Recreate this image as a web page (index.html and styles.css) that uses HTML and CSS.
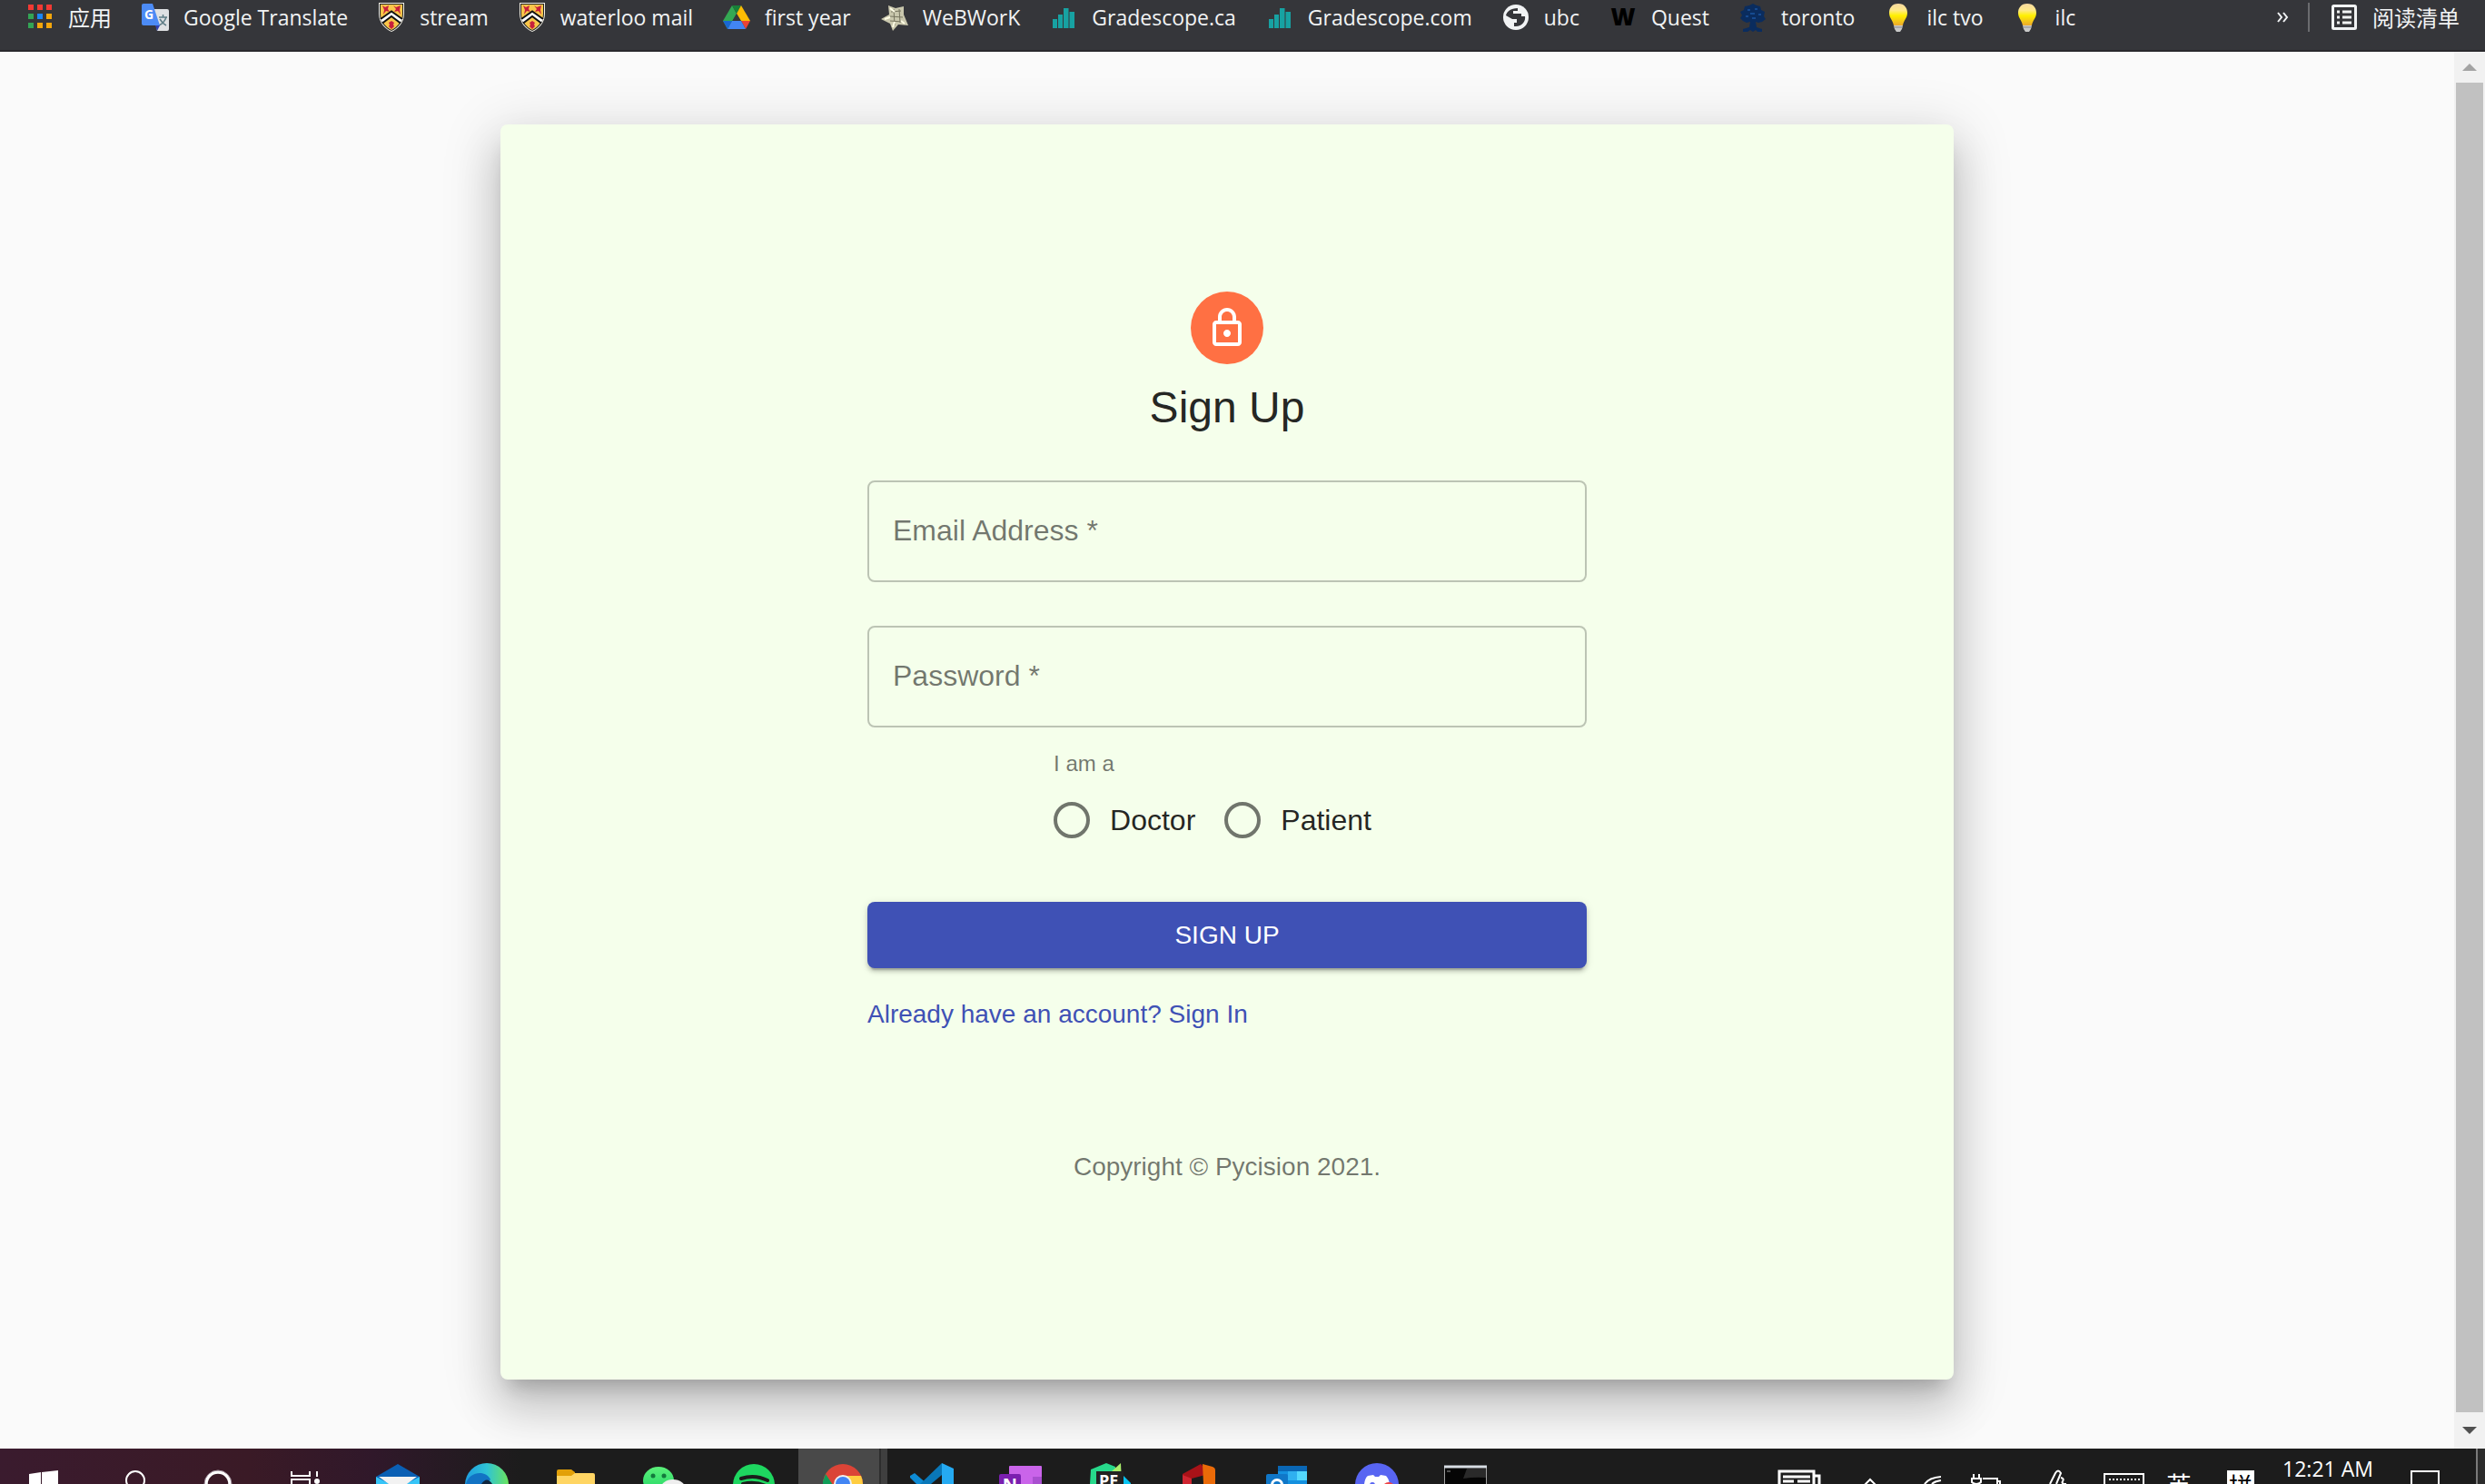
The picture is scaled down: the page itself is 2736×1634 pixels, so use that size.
FILE: index.html
```html
<!DOCTYPE html>
<html lang="en">
<head>
    <meta charset="UTF-8">
    <meta name="viewport" content="width=device-width, initial-scale=1.0">
    <title>Sign Up</title>
    <link rel="stylesheet" href="styles.css">
</head>
<body>
    <!-- shared bookmark icons -->
    <svg class="defs" width="0" height="0" aria-hidden="true">
        <symbol id="shield" viewBox="0 0 32 32">
            <path d="M2 0H30V12C30 22 23 29 16 32C9 29 2 22 2 12Z" fill="#f4f1e6"/>
            <path d="M3 1H29V12C29 21 23 28 16 31C9 28 3 21 3 12Z" fill="#222"/>
            <path d="M4 2H28V12C28 21 22 27 16 30C10 27 4 21 4 12Z" fill="#f9c64a"/>
            <path d="M6 3l3 2 4-2-1 4 2 3-4-1-3 4 1-5zM18 3l3 2 5-2-1 5 1 5-3-4-4 1 2-3zM13 22l3-2 3 2-1 2 1 2-3 3-3-3 1-2z" fill="#c8203c"/>
            <path d="M5 20L16 12L27 20" fill="none" stroke="#fff" stroke-width="5"/>
            <path d="M4 18L16 9.500L28 18M6 22.500L16 15L26 22.500" fill="none" stroke="#111" stroke-width="2"/>
        </symbol>
        <symbol id="bars" viewBox="0 0 32 32">
            <path d="M4 18h5v10H4zM10 13h5v15h-5zM16 6h5.500v22H16zM22.500 10h5.500v18h-5.500z" fill="#17a2a2"/>
        </symbol>
        <symbol id="bulb" viewBox="0 0 32 32">
            <path d="M16 1C9 1 6 6 6 11C6 17 10 19 11 25H21C22 19 26 17 26 11C26 6 23 1 16 1Z" fill="url(#glow)"/>
            <path d="M11 25h10l-1 4-2 3h-4l-2-3z" fill="#c9c9c9"/>
            <path d="M11 27h10" stroke="#8a8a8a"/>
        </symbol>
        <linearGradient id="glow" x2="0" y2="1">
            <stop offset="0" stop-color="#f7d9a0"/>
            <stop offset=".3" stop-color="#ffe98a"/>
            <stop offset=".55" stop-color="#fff000"/>
            <stop offset="1" stop-color="#eda92c"/>
        </linearGradient>
    </svg>

    <nav class="bookmarks">
        <a href="#" class="bookmark cjk" lang="zh">
            <svg viewBox="0 0 32 32">
                <path d="M3 2h6v6H3zM13 2h6v6h-6zM23 2h6v6h-6z" fill="#f33a34"/>
                <path d="M3 12h6v6H3zM3 22h6v6H3z" fill="#33a455"/>
                <path d="M13 12h6v6h-6z" fill="#1a86f7"/>
                <path d="M23 12h6v6h-6zM13 22h6v6h-6zM23 22h6v6h-6z" fill="#f4a60b"/>
            </svg>
            应用
        </a>
        <a href="#" class="bookmark">
            <svg viewBox="0 0 32 32">
                <path d="M13 7H29Q31 7 31 9V29Q31 31 29 31H18Z" fill="#dfe1e3"/>
                <path d="M20 16h9M24.500 13v3M28 16Q26 22 20 25M21 18Q24 23 28 25" fill="none" stroke="#5f7d86" stroke-width="1.500"/>
                <path d="M16 25H21L18 31Z" fill="#3040b0"/>
                <path d="M3 1H13L21 25H3Q1 25 1 23V3Q1 1 3 1Z" fill="#4c8bf5"/>
                <text x="4" y="18" class="glyph" font-size="14" fill="#fff">G</text>
            </svg>
            Google Translate
        </a>
        <a href="#" class="bookmark"><svg><use href="#shield"/></svg>stream</a>
        <a href="#" class="bookmark"><svg><use href="#shield"/></svg>waterloo mail</a>
        <a href="#" class="bookmark">
            <svg viewBox="0 0 32 32">
                <path d="M11 3L1 20L6 29L16 12Z" fill="#34a853"/>
                <path d="M11 3H21L16 12Z" fill="#188038"/>
                <path d="M21 3L31 20H21L16 12Z" fill="#fbbc04"/>
                <path d="M31 20L26 29L21 20Z" fill="#ea4335"/>
                <path d="M11 20H21L26 29H6Z" fill="#4285f4"/>
                <path d="M1 20H11L6 29Z" fill="#1967d2"/>
                <path d="M16 12L20.500 20H11.500Z" fill="#35363a"/>
            </svg>
            first year
        </a>
        <a href="#" class="bookmark">
            <svg viewBox="0 0 32 32">
                <path d="M9 3L17 6L26 4L26 13L31 25L20 24L14 31L11 23L1 18L10 13Z" fill="#c9c7ad"/>
                <path d="M12 10l11-1M11 15l14 1M11 20l14 1M15 7l1 18M21 7l1 15" stroke="#77755f" fill="none"/>
                <path d="M11 6l5 4M5 18l6-2M14 27l2-6M23 20l4 3" stroke="#fffde6" stroke-width="2" fill="none"/>
            </svg>
            WeBWorK
        </a>
        <a href="#" class="bookmark"><svg><use href="#bars"/></svg>Gradescope.ca</a>
        <a href="#" class="bookmark"><svg><use href="#bars"/></svg>Gradescope.com</a>
        <a href="#" class="bookmark">
            <svg viewBox="0 0 32 32">
                <circle cx="16" cy="16" r="14" fill="#f1f3f4"/>
                <path d="M18 6C10 6 6 10 5 14L12 18H17V22H14V26C23 27 27 20 26 15H22V12H13V9H18Z" fill="#35363a"/>
            </svg>
            ubc
        </a>
        <a href="#" class="bookmark">
            <svg viewBox="0 0 32 32"><text x="16" y="25" text-anchor="middle" class="glyph heavy" font-size="26">W</text></svg>
            Quest
        </a>
        <a href="#" class="bookmark">
            <svg viewBox="0 0 32 32">
                <path d="M16 1l4 2 4 1 1 4 4 2-1 5 2 3-4 3-4 1-3-1 1 6 6 2v3h-5l-2-2-3 2-3-2-3 2H5v-3l7-2 1-6-4 1-4-2-3-3 2-3-2-4 4-2 1-4 5-1z" fill="#0a2c5e"/>
                <path d="M10 8h3M18 7h3M13 12h5M22 13h3M8 15h3M15 17h4" stroke="#164a90" stroke-width="2"/>
            </svg>
            toronto
        </a>
        <a href="#" class="bookmark"><svg><use href="#bulb"/></svg>ilc tvo</a>
        <a href="#" class="bookmark"><svg><use href="#bulb"/></svg>ilc</a>
        <button class="more" aria-label="More bookmarks">
            <svg viewBox="0 0 16 16"><path d="M3 3l4 5-4 5M9 3l4 5-4 5" fill="none" stroke="#f1f3f4" stroke-width="2"/></svg>
        </button>
        <a href="#" class="bookmark cjk reading-list" lang="zh">
            <svg viewBox="0 0 32 32">
                <rect x="3.500" y="3.500" width="25" height="25" rx="1" fill="none" stroke="#f1f3f4" stroke-width="3"/>
                <path d="M8 10h3M8 16h3M8 22h3M14 10h10M14 16h10M14 22h10" stroke="#f1f3f4" stroke-width="3"/>
            </svg>
            阅读清单
        </a>
    </nav>

    <div class="viewport">
        <main class="page">
            <div class="card">
                <div class="container">
                    <div class="avatar">
                        <svg viewBox="0 0 24 24"><path fill="#fff" d="M12 17c1.100 0 2-.9 2-2s-.9-2-2-2-2 .9-2 2 .9 2 2 2zm6-9h-1V6c0-2.760-2.240-5-5-5S7 3.240 7 6v2H6c-1.100 0-2 .9-2 2v10c0 1.100.9 2 2 2h12c1.100 0 2-.9 2-2V10c0-1.100-.9-2-2-2zM9 6c0-1.660 1.340-3 3-3s3 1.340 3 3v2H9V6zm9 14H6V10h12v10z"/></svg>
                    </div>
                    <h1>Sign Up</h1>
                    <form class="form">
                        <div class="field">
                            <input type="email" id="email" required>
                            <label for="email">Email Address *</label>
                        </div>
                        <div class="field">
                            <input type="password" id="password" required>
                            <label for="password">Password *</label>
                        </div>
                        <fieldset class="role">
                            <legend>I am a</legend>
                            <div class="options">
                                <label class="option"><input type="radio" name="role" value="doctor">Doctor</label>
                                <label class="option"><input type="radio" name="role" value="patient">Patient</label>
                            </div>
                        </fieldset>
                        <button type="submit" class="submit-btn">SIGN UP</button>
                        <a href="#" class="signin-link">Already have an account? Sign In</a>
                    </form>
                    <p class="copyright">Copyright © Pycision 2021.</p>
                </div>
            </div>
        </main>
        <div class="scrollbar">
            <div class="arrow up"></div>
            <div class="thumb"></div>
            <div class="arrow down"></div>
        </div>
    </div>

    <footer class="taskbar">
        <div class="system">
            <svg viewBox="0 0 96 39"><path d="M32 28L45 26V39H32zM46 26L64 24V39H46z" fill="#fff"/></svg>
            <svg viewBox="0 0 96 39"><circle cx="53" cy="35" r="10" fill="none" stroke="#fff" stroke-width="2"/></svg>
            <svg viewBox="0 0 96 39"><circle cx="48" cy="39" r="13" fill="none" stroke="#fff" stroke-width="3.500"/><circle cx="48" cy="39" r="15" fill="none" stroke="#a898a4"/></svg>
            <svg viewBox="0 0 96 39"><path d="M33 25v5h20v-5M33 39v-5h20v5M61 25v6" fill="none" stroke="#fff" stroke-width="2"/><circle cx="61" cy="36" r="3" fill="#fff"/></svg>
        </div>
        <div class="apps">
            <svg viewBox="0 0 98 39">
                <path d="M25 31L49 17L73 31V39H25z" fill="#0a5fb4"/>
                <path d="M25 31L40 39H25zM73 31L58 39H73z" fill="#36c5f8"/>
                <path d="M28 31H70L59 39H39z" fill="#f2f2f2"/>
            </svg>
            <svg viewBox="0 0 98 39">
                <linearGradient id="edge"><stop offset="0" stop-color="#1e9de0"/><stop offset=".5" stop-color="#2fc3d6"/><stop offset="1" stop-color="#6be45c"/></linearGradient>
                <circle cx="49" cy="40" r="24" fill="url(#edge)"/>
                <path d="M26 39C29 25 48 23 53 34L49 39z" fill="#1273c4"/>
                <path d="M43 39Q49 30 55 39z" fill="#10273f"/>
            </svg>
            <svg viewBox="0 0 98 39">
                <path d="M28 39V25Q28 23 30 23H44L48 26V39z" fill="#e2a008"/>
                <path d="M28 30H44L48 27H68Q70 27 70 29V39H28z" fill="#ffd563"/>
            </svg>
            <svg viewBox="0 0 98 39">
                <linearGradient id="chat" x2="0" y2="1"><stop offset="0" stop-color="#5cf07a"/><stop offset="1" stop-color="#1fd565"/></linearGradient>
                <ellipse cx="42" cy="35" rx="17" ry="15" fill="url(#chat)"/>
                <circle cx="36" cy="30" r="2.500" fill="#137a3c"/><circle cx="48" cy="30" r="2.500" fill="#137a3c"/>
                <ellipse cx="58" cy="45" rx="14" ry="11" fill="#eee"/>
            </svg>
            <svg viewBox="0 0 98 39">
                <circle cx="49" cy="40" r="23" fill="#1ed760"/>
                <path d="M35 33Q50 28 64 35M37 39Q50 36 62 41" fill="none" stroke="#1c1c1c" stroke-width="4" stroke-linecap="round"/>
            </svg>
            <svg viewBox="0 0 98 39" class="active">
                <circle cx="49" cy="39" r="22" fill="#db4437"/>
                <path d="M30 28L42 46H27V36z" fill="#0f9d58"/>
                <path d="M49 30H69Q71 34 71 39H49z" fill="#ffcd40"/>
                <circle cx="49" cy="39" r="10" fill="#f1f1f1"/><circle cx="49" cy="39" r="8" fill="#4285f4"/>
            </svg>
            <svg viewBox="0 0 98 39">
                <path d="M25 30L30 27L44 39H32L25 32z" fill="#0e8bd4"/>
                <path d="M36 39L60 16V39H42z" fill="#0977b8"/>
                <path d="M60 16L73 22V39H60z" fill="#25aaf2"/>
                <path d="M60 29V39H48z" fill="#1c1c1c"/>
            </svg>
            <svg viewBox="0 0 98 39">
                <rect x="36" y="19" width="36" height="24" rx="1" fill="#ca64ea"/>
                <path d="M62 31h10v8H62z" fill="#a94fd0"/>
                <rect x="25" y="28" width="24" height="24" rx="2" fill="#7b1fb0"/>
                <text x="37" y="47" text-anchor="middle" class="glyph" font-size="20" fill="#fff">N</text>
            </svg>
            <svg viewBox="0 0 98 39">
                <path d="M28 23L45 16L55 20V39H27z" fill="#27d98b"/>
                <path d="M51 25L61 16L62 39H51z" fill="#a9ed6b"/>
                <path d="M62 28L72 38V39H62z" fill="#07c3f2"/>
                <rect x="34" y="25" width="30" height="24" fill="#222"/>
                <text x="37" y="42" class="glyph" font-size="18" fill="#fff">PE</text>
            </svg>
            <svg viewBox="0 0 98 39">
                <path d="M31 28L51 17L56 22V29L41 33V39H31z" fill="#a81218"/>
                <path d="M31 29L41 33V39H31z" fill="#cf2530"/>
                <path d="M53 17L64 20Q67 21 67 24V39H54z" fill="#ea6a08"/>
            </svg>
            <svg viewBox="0 0 98 39">
                <rect x="38" y="19" width="32" height="24" rx="1" fill="#1490df"/>
                <path d="M38 19h32v6H38z" fill="#0a67b5"/>
                <path d="M49 25h10v10H49z" fill="#2fb0f0"/><path d="M59 25h11v10H59z" fill="#53d8fd"/>
                <rect x="25" y="28" width="24" height="24" rx="2" fill="#1077c8"/>
                <circle cx="37" cy="40" r="5.500" fill="none" stroke="#fff" stroke-width="3"/>
            </svg>
            <svg viewBox="0 0 98 39">
                <circle cx="49" cy="40" r="24" fill="#5865f2"/>
                <path d="M35 39Q36 32 39 30L45 29L47 31H51L53 29L59 30Q62 33 63 39z" fill="#fff"/>
                <circle cx="44" cy="40" r="3" fill="#5865f2"/><circle cx="62" cy="44" r="7" fill="#ed4245"/>
            </svg>
            <svg viewBox="0 0 98 39">
                <rect x="25.500" y="20" width="46" height="30" fill="#050505" stroke="#a0a0a0"/>
                <path d="M25 20h47" stroke="#d8dde4" stroke-width="3"/>
                <path d="M50 22h21v10Q58 31 46 33z" fill="#2a2a2a"/>
                <path d="M28 25h4" stroke="#999"/>
            </svg>
        </div>
        <div class="tray">
            <svg viewBox="0 0 68 39"><path d="M2 39V25h38v14M40 30h6v9M6 31h30M6 36h12M22 36h14" fill="none" stroke="#fff" stroke-width="3"/></svg>
            <svg viewBox="0 0 68 39"><path d="M28 40l6-6 6 6" fill="none" stroke="#fff" stroke-width="2"/></svg>
            <svg viewBox="0 0 68 39"><path d="M26 39Q31 32 44 31M34 39Q37 36 44 35" fill="none" stroke="#fff" stroke-width="2"/></svg>
            <svg viewBox="0 0 68 39"><path d="M12 28v4M18 28v4M10 33h10v4q-5 4-10 0zM15 38v1M22 33h16v6M38 36h3v3" fill="none" stroke="#fff" stroke-width="2"/></svg>
            <svg viewBox="0 0 68 39"><path d="M28 39L34 27Q37 22 40 27L35 39M40 32Q44 33 42 36T46 39" fill="none" stroke="#fff" stroke-width="2"/></svg>
            <svg viewBox="0 0 68 39"><path d="M20 39V28h43v11" fill="none" stroke="#fff" stroke-width="2"/><path d="M25 34h34" stroke="#fff" stroke-width="2" stroke-dasharray="2 2"/></svg>
            <span class="ime" lang="zh">英</span>
            <span class="ime" lang="zh"><b>拼</b></span>
            <time class="clock">12:21 AM</time>
            <svg viewBox="0 0 101 39"><path d="M30 39V25h30v14" fill="none" stroke="#fff" stroke-width="2"/></svg>
            <button class="show-desktop" aria-label="Show desktop"></button>
        </div>
    </footer>
</body>
</html>
```

FILE: styles.css
```css
* {
    box-sizing: border-box;
}
body {
    margin: 0;
    height: 100vh;
    display: flex;
    flex-direction: column;
    overflow: hidden;
    background-color: #fafafa;
    color: rgba(0, 0, 0, 0.87);
    font-family: "Liberation Sans", Arial, sans-serif;
    font-size: 32px;
}
a {
    text-decoration: none;
}
button {
    border: none;
    padding: 0;
    background: none;
    font-family: inherit;
    cursor: pointer;
}
.defs {
    position: absolute;
}
.glyph {
    font-family: "Open Sans", sans-serif;
    font-weight: bold;
}
.heavy {
    font-weight: 800;
}

/* bookmarks bar */
.bookmarks {
    display: flex;
    align-items: center;
    gap: 32px;
    height: 57px;
    flex-shrink: 0;
    padding: 0 28px 18px;
    background-color: #35363a;
    border-bottom: 2px solid #29282c;
    font-family: "Open Sans", "Noto Sans CJK SC", sans-serif;
    font-size: 23px;
    line-height: 36px;
    white-space: nowrap;
}
.bookmark {
    display: flex;
    align-items: center;
    gap: 15px;
    color: #f1f3f4;
}
.bookmark svg {
    width: 32px;
    height: 32px;
}
.cjk {
    font-family: "Noto Sans CJK SC", sans-serif;
    font-size: 24px;
}
.more {
    display: flex;
    margin-left: auto;
}
.more svg {
    width: 16px;
    height: 16px;
}
.reading-list {
    margin-left: -12px;
    padding-left: 22px;
    border-left: 2px solid #6b6c6f;
    line-height: 32px;
}

/* page */
.viewport {
    display: flex;
    flex: 1;
    min-height: 0;
}
.page {
    flex: 1;
    padding: 80px 32px;
    overflow: hidden;
}
.card {
    max-width: 1600px;
    margin: 0 auto;
    padding: 184px 48px 214px;
    background-color: #f5ffeb;
    border-radius: 8px;
    box-shadow: 0 16px 20px -10px rgba(0, 0, 0, 0.2),
        0 32px 48px 4px rgba(0, 0, 0, 0.14),
        0 12px 60px 10px rgba(0, 0, 0, 0.12);
}
.container {
    max-width: 792px;
    margin: 0 auto;
    display: flex;
    flex-direction: column;
    align-items: center;
}
.avatar {
    display: flex;
    align-items: center;
    justify-content: center;
    width: 80px;
    height: 80px;
    border-radius: 50%;
    background-color: #ff7043;
}
.avatar svg {
    width: 48px;
    height: 48px;
}
h1 {
    margin: 16px 0 48px;
    font-size: 48px;
    font-weight: normal;
    line-height: 64px;
}
.form {
    display: flex;
    flex-direction: column;
    width: 100%;
}
.field {
    position: relative;
    margin-bottom: 48px;
}
.field input {
    display: block;
    width: 100%;
    height: 112px;
    padding: 0 28px;
    border: 2px solid rgba(0, 0, 0, 0.23);
    border-radius: 8px;
    background: transparent;
    font: inherit;
    outline: none;
}
.field label {
    position: absolute;
    left: 28px;
    top: 35px;
    line-height: 40px;
    color: rgba(0, 0, 0, 0.54);
    pointer-events: none;
}
.field input:focus {
    border-color: #3f51b5;
}
.field input:focus + label,
.field input:valid + label {
    top: -20px;
    padding: 0 8px;
    background-color: #f5ffeb;
    font-size: 24px;
}
.role {
    align-self: center;
    margin: -28px 0 0;
    padding: 0 32px 0 0;
    border: none;
}
.role legend {
    padding: 0;
    font-size: 24px;
    line-height: 40px;
    color: rgba(0, 0, 0, 0.54);
}
.options {
    display: flex;
    gap: 32px;
}
.option {
    display: flex;
    align-items: center;
    gap: 22px;
    height: 84px;
}
.option input {
    appearance: none;
    width: 40px;
    height: 40px;
    margin: 0;
    border: 4px solid rgba(0, 0, 0, 0.54);
    border-radius: 50%;
}
.option input:checked {
    border-color: #3f51b5;
    background: radial-gradient(#3f51b5 10px, transparent 11px);
}
.submit-btn {
    width: 100%;
    margin: 48px 0 31px;
    padding: 12px 32px;
    border-radius: 8px;
    background-color: #3f51b5;
    color: #fff;
    font-size: 28px;
    line-height: 49px;
    box-shadow: 0 6px 2px -4px rgba(0, 0, 0, 0.2),
        0 4px 4px 0 rgba(0, 0, 0, 0.14),
        0 2px 10px 0 rgba(0, 0, 0, 0.12);
}
.submit-btn:hover {
    background-color: #303f9f;
}
.signin-link {
    align-self: flex-start;
    color: #3f51b5;
    font-size: 28px;
    line-height: 40px;
}
.copyright {
    margin: 128px 0 0;
    color: rgba(0, 0, 0, 0.54);
    font-size: 28px;
    line-height: 40px;
}

/* scrollbar */
.scrollbar {
    display: flex;
    flex-direction: column;
    width: 34px;
    padding: 0 2px;
    background-color: #f1f1f1;
}
.thumb {
    flex: 1;
    background-color: #c1c1c1;
}
.arrow {
    display: flex;
    align-items: center;
    justify-content: center;
    height: 34px;
}
.arrow.down {
    height: 40px;
}
.arrow::before {
    content: "";
    border: 8px solid transparent;
}
.up::before {
    border-top: none;
    border-bottom-color: #a3a3a3;
}
.down::before {
    border-bottom: none;
    border-top-color: #505050;
}

/* taskbar */
.taskbar {
    display: flex;
    flex-shrink: 0;
    height: 39px;
    overflow: hidden;
    background: #1c1c1c linear-gradient(90deg, #3a1b2e, #3a1a26 10%, #30182a 15%, #1c1c1c 21%);
    color: #fff;
}
.system,
.apps,
.tray {
    display: flex;
}
.system svg {
    width: 96px;
    height: 39px;
}
.apps {
    margin-left: 5px;
}
.apps svg {
    width: 98px;
    height: 39px;
}
.apps .active {
    background: linear-gradient(90deg, #494949 89px, #2d2d2d 89px, #2d2d2d 91px, #3f3f3f 91px);
}
.tray {
    margin-left: auto;
}
.tray svg,
.ime {
    width: 68px;
    height: 39px;
}
.ime {
    padding-top: 24px;
    text-align: center;
    font-family: "Noto Sans CJK SC", sans-serif;
    font-size: 28px;
    line-height: 32px;
}
.ime b {
    display: block;
    width: 30px;
    margin: 0 auto;
    background-color: #fff;
    color: #000;
    font-size: 26px;
    font-weight: normal;
}
.clock {
    width: 124px;
    padding-top: 6px;
    text-align: center;
    font-family: "Open Sans", sans-serif;
    font-size: 23px;
    line-height: 32px;
}
.tray .clock + svg {
    width: 101px;
}
.show-desktop {
    width: 10px;
    border-left: 2px solid #7a7a7a;
    background-color: #2b2b2b;
}
```
